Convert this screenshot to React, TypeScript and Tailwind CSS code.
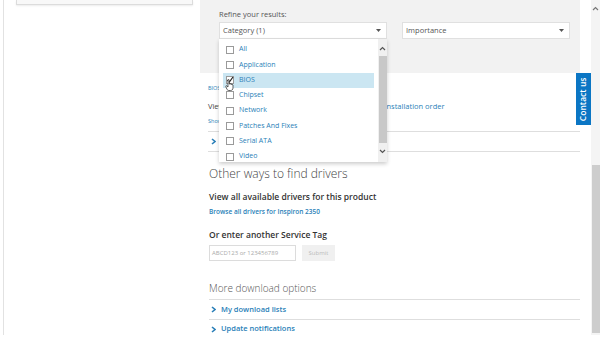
import React from "react";

const items = ["All", "Application", "BIOS", "Chipset", "Network", "Patches And Fixes", "Serial ATA", "Video"];

function Chevron() {
  return (
    <svg width="5" height="7" viewBox="0 0 5 7" className="shrink-0">
      <path d="M1 1 L4 3.5 L1 6" fill="none" stroke="#2a7fb8" strokeWidth="1.6" />
    </svg>
  );
}

function Caret() {
  return (
    <svg width="5" height="3" viewBox="0 0 5 3">
      <path d="M0 0 H5 L2.5 3 Z" fill="#555" />
    </svg>
  );
}

export default function App() {
  return (
    <div
      className="relative w-[605px] h-[346px] overflow-hidden bg-white flex text-[#444]"
      style={{ fontFamily: '"Open Sans", "Noto Sans", sans-serif' }}
    >
      {/* left column */}
      <div className="w-[200px] shrink-0 flex">
        <div className="w-[3px]" />
        <div className="w-px h-[335px] bg-[#e2e2e2]" />
        <div className="pl-[12px]">
          <div className="w-[177px] h-[5px] bg-[#f8f8f8] border-x border-b border-[#dcdcdc] shadow-[0_1px_2px_rgba(0,0,0,0.08)]" />
        </div>
      </div>

      {/* center column */}
      <div className="w-[380px] shrink-0 flex flex-col">
        <div className="h-[73px] bg-[#f2f2f2] pl-[19px] pt-[9px]">
          <div className="text-[7.5px] leading-[10px] text-[#555]">Refine your results:</div>
          <div className="mt-[3px] flex gap-[15px]">
            <div className="w-[168px] h-[17px] bg-white border border-[#e0e0e0] flex items-center justify-between pl-[3px] pr-[5px]">
              <span className="text-[7.5px] text-[#555]">Category (1)</span>
              <Caret />
            </div>
            <div className="w-[168px] h-[17px] bg-white border border-[#e0e0e0] flex items-center justify-between pl-[3px] pr-[5px]">
              <span className="text-[7.5px] text-[#555]">Importance</span>
              <Caret />
            </div>
          </div>
        </div>

        <div className="pl-[8px] flex flex-col">
          <div className="mt-[11px] text-[5.5px] leading-[8px] text-[#2a7fb8]">BIOS</div>
          <div className="mt-[9px] flex text-[7.5px] leading-[10px]">
            <span className="text-[#444]">View</span>
            <span className="ml-[160px] text-[#2a7fb8]">Installation order</span>
          </div>
          <div className="mt-[6px] text-[5.5px] leading-[8px] text-[#2a7fb8]">Show</div>
          <div className="mt-[6px] h-px bg-[#dedede] w-[372px]" />
          <div className="h-[19px] flex items-center pl-[3px]">
            <Chevron />
          </div>
          <div className="h-px bg-[#dedede] w-[372px]" />

          <div className="ml-px mt-[14px] text-[12px] leading-[16px] text-[#444] font-light">Other ways to find drivers</div>
          <div className="ml-px mt-[9px] text-[8.5px] leading-[11px] text-[#333] font-semibold">View all available drivers for this product</div>
          <div className="ml-px mt-[5px] text-[6.5px] leading-[9px] text-[#2a7fb8] font-semibold">Browse all drivers for Inspiron 2350</div>
          <div className="ml-px mt-[13px] text-[8.5px] leading-[11px] text-[#333] font-semibold">Or enter another Service Tag</div>
          <div className="ml-px mt-[5px] flex gap-[6px]">
            <div className="w-[87px] h-[16px] border border-[#dcdcdc] flex items-center pl-[2px] text-[6px] text-[#aaa]">ABCD123 or 123456789</div>
            <div className="w-[33px] h-[16px] bg-[#f0f0f0] flex items-center justify-center text-[6px] text-[#bbb]">Submit</div>
          </div>
          <div className="ml-px mt-[20px] text-[10px] leading-[14px] text-[#555] font-light">More download options</div>
          <div className="mt-[4px] ml-px h-px bg-[#dedede] w-[371px]" />
          <div className="ml-px h-[19px] flex items-center gap-[5px] pl-[2px]">
            <Chevron />
            <span className="text-[7.5px] text-[#2a7fb8] font-semibold">My download lists</span>
          </div>
          <div className="ml-px h-px bg-[#dedede] w-[371px]" />
          <div className="ml-px h-[18px] flex items-center gap-[5px] pl-[2px]">
            <Chevron />
            <span className="text-[7.5px] text-[#2a7fb8] font-semibold">Update notifications</span>
          </div>
        </div>
      </div>

      <div className="w-[11px] shrink-0" />

      {/* page scrollbar */}
      <div className="w-[9px] shrink-0 h-[335px] bg-[#f4f4f4] flex flex-col items-center">
        <svg width="7" height="5" viewBox="0 0 7 5" className="mt-[6px]">
          <path d="M1 4 L3.5 1.5 L6 4" fill="none" stroke="#777" strokeWidth="1.2" />
        </svg>
        <div className="mt-[154px] w-[8px] h-[168px] bg-[#cdcdcd]" />
      </div>

      {/* contact us tab */}
      <div className="absolute left-[576px] top-[73px] w-[15px] h-[52px] bg-[#0b76c4] flex items-center justify-center">
        <span className="-rotate-90 whitespace-nowrap text-[8.5px] text-white font-semibold">Contact us</span>
      </div>

      {/* category dropdown */}
      <div className="absolute left-[219px] top-[39px] w-[168px] h-[123px] bg-white shadow-[0_2px_4px_rgba(0,0,0,0.2)] flex">
        <div className="flex-1 pl-[4px] pt-[3px] grid grid-rows-[repeat(8,15px)] gap-y-[0.3px]">
          {items.map((it) => (
            <div
              key={it}
              className={`flex items-center pl-[3px] gap-[5px] w-[151px] ${it === "BIOS" ? "bg-[#cbe6f2]" : ""}`}
            >
              <div className="relative w-[8px] h-[8px] border border-[#9a9a9a] bg-white">
                {it === "BIOS" && (
                  <svg width="8" height="8" viewBox="0 0 8 8" className="absolute -left-px -top-px">
                    <path d="M1.5 4 L3.3 6 L7 1" fill="none" stroke="#222" strokeWidth="1.2" />
                  </svg>
                )}
              </div>
              <span className="text-[7px] text-[#2a7fb8]">{it}</span>
            </div>
          ))}
        </div>
        <div className="w-[9px] bg-[#f0f0f0] flex flex-col items-center">
          <svg width="7" height="5" viewBox="0 0 7 5" className="mt-[7px]">
            <path d="M1 4 L3.5 1.5 L6 4" fill="none" stroke="#555" strokeWidth="1.2" />
          </svg>
          <div className="mt-[5px] w-[8px] h-[87px] bg-[#c8c8c8]" />
          <svg width="7" height="5" viewBox="0 0 7 5" className="mt-[6px]">
            <path d="M1 1 L3.5 3.5 L6 1" fill="none" stroke="#555" strokeWidth="1.2" />
          </svg>
        </div>
      </div>

      {/* mouse cursor */}
      <svg width="9" height="12" viewBox="0 0 9 12" className="absolute left-[225px] top-[79px]">
        <path
          d="M3 1 C3 0.3 4.2 0.3 4.2 1 L4.2 5 L5 5 C5 4.5 6 4.5 6 5 L6 5.5 C6 5 7 5 7 5.5 L7 6 C7 5.6 8 5.6 8 6.2 L8 9 C8 10.5 7 11.5 5.5 11.5 L4 11.5 C3 11.5 2.3 11 1.8 10 L0.8 7.5 C0.5 6.8 1.3 6.4 1.8 7 L3 8 Z"
          fill="white"
          stroke="#222"
          strokeWidth="0.7"
        />
      </svg>
    </div>
  );
}
